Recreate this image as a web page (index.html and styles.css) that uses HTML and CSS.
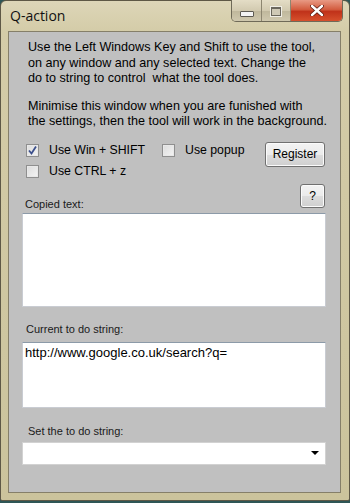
FILE: index.html
```html
<!DOCTYPE html>
<html lang="en">
<head>
  <meta charset="UTF-8">
  <title>Q-action</title>
  <link rel="stylesheet" href="styles.css">
</head>
<body>
  <div class="window">
    <div class="titlebar">
      <span class="title">Q-action</span>
      <div class="caption-buttons">
        <span class="cap-btn cap-min"><span class="glyph-min"></span></span>
        <span class="cap-btn cap-max"><span class="glyph-max"></span></span>
        <span class="cap-btn cap-close">
          <svg width="14" height="11" viewBox="0 0 14 11">
            <path d="M2 1 L12 10 M12 1 L2 10" stroke="#5a1a10" stroke-width="4" stroke-linecap="round"/>
            <path d="M2 1 L12 10 M12 1 L2 10" stroke="#fff" stroke-width="2.4" stroke-linecap="round"/>
          </svg>
        </span>
      </div>
    </div>

    <div class="client">
      <div class="intro">
        <p>Use the Left Windows Key and Shift to use the tool,<br>on any window and any selected text. Change the<br>do to string to control&nbsp; what the tool does.</p>
        <p>Minimise this window when you are funished with<br>the settings, then the tool will work in the background.</p>
      </div>

      <div class="options">
        <div class="checks">
          <label class="check"><span class="box">
            <svg width="11" height="11" viewBox="0 0 11 11"><path d="M2 5.5 L4.5 8.5 L9 1.5" fill="none" stroke="#3b4f8c" stroke-width="1.8"/></svg>
          </span>Use Win + SHIFT</label>
          <label class="check"><span class="box"></span>Use popup</label>
          <label class="check"><span class="box"></span>Use CTRL + z</label>
        </div>
        <button class="btn register">Register</button>
      </div>

      <div class="field-head">
        <span class="label copied-label">Copied text:</span>
        <button class="btn help">?</button>
      </div>
      <div class="textbox copied"></div>

      <div class="label current-label">Current to do string:</div>
      <div class="textbox current">http://www.google.co.uk/search?q=</div>

      <div class="label set-label">Set the to do string:</div>
      <div class="combo"><span class="arrow"></span></div>
    </div>
  </div>
</body>
</html>
```

FILE: styles.css
```css
body {
  margin: 0;
  width: 350px;
  height: 503px;
  background-color: #2e5656;
  font-family: "Liberation Sans", Arial, sans-serif;
  color: #000;
  overflow: hidden;
}

.window {
  box-sizing: border-box;
  height: 501px;
  border: 1px solid #5e5846;
  border-radius: 6px 6px 2px 2px;
  background: linear-gradient(180deg, #ddd6b8 0%, #d4cca8 30px, #cbc39c 100%);
  padding: 0 8px 7px 7px;
  display: flex;
  flex-direction: column;
}

.titlebar {
  height: 30px;
  display: flex;
  align-items: flex-start;
  justify-content: space-between;
}

.title {
  font-family: "Open Sans", "Liberation Sans", sans-serif;
  font-size: 14px;
  line-height: 20px;
  margin: 5px 0 0 2px;
  color: #111;
}

.caption-buttons {
  display: flex;
  margin: -1px -2px 0 0;
  height: 21px;
  border: 1px solid #6f6a58;
  border-top: none;
  border-radius: 0 0 5px 5px;
  overflow: hidden;
}

.cap-btn {
  display: flex;
  align-items: center;
  justify-content: center;
  height: 21px;
}

.cap-min, .cap-max {
  width: 29px;
  background: linear-gradient(180deg, #e4ddc6 0%, #d2cab0 50%, #bfb79b 51%, #cfc8ae 100%);
  border-right: 1px solid #8d8670;
}

.cap-max {
  width: 28px;
}

.cap-close {
  width: 51px;
  background: linear-gradient(180deg, #e89a84 0%, #d35c3f 45%, #c0321a 55%, #d6502c 100%);
}

.glyph-min {
  width: 12px;
  height: 4px;
  background: #f4f4f4;
  border: 1px solid #5d5a52;
  border-radius: 1px;
  margin-top: 6px;
}

.glyph-max {
  width: 8px;
  height: 6px;
  border: 1px solid #6a665c;
  border-top-width: 2px;
  background: #cfc9b6;
  box-shadow: 0 0 0 1px #f0eee6;
  margin-top: 1px;
}

.client {
  flex: 1;
  background-color: #c0c0c0;
  border: 1px solid #857f69;
  padding: 8px 14px 0 13px;
  display: flex;
  flex-direction: column;
}

.intro {
  padding-left: 6px;
  font-size: 12.6px;
  line-height: 15.5px;
  white-space: nowrap;
}

.intro p {
  margin: 0 0 12px;
}

.intro p:last-child {
  margin-bottom: 0;
}

.options {
  display: flex;
  justify-content: space-between;
  align-items: flex-start;
  margin-top: 10px;
}

.checks {
  display: grid;
  grid-template-columns: auto auto;
  grid-auto-rows: 21px;
  column-gap: 17px;
  margin-left: 4px;
}

.check {
  display: flex;
  align-items: center;
  font-size: 12.3px;
  white-space: nowrap;
}

.box {
  box-sizing: border-box;
  width: 13px;
  height: 13px;
  margin-right: 10px;
  border: 1px solid #8f8f8f;
  background: linear-gradient(135deg, #dcdcdc 0%, #f4f4f4 100%);
  box-shadow: inset 0 0 0 1px #e8e8e8;
  display: flex;
  align-items: center;
  justify-content: center;
}

.btn {
  box-sizing: border-box;
  font-family: "Liberation Sans", Arial, sans-serif;
  font-size: 12px;
  color: #000;
  border: 1px solid #707070;
  border-radius: 3px;
  background: linear-gradient(180deg, #f3f3f3 0%, #ebebeb 50%, #dddddd 51%, #cfcfcf 100%);
  box-shadow: inset 0 0 0 1px #fbfbfb;
  padding: 0;
}

.register {
  width: 60px;
  height: 25px;
  margin: 2px 1px 0 0;
}

.field-head {
  display: flex;
  justify-content: space-between;
  align-items: flex-end;
  margin-top: 2px;
}

.help {
  width: 25px;
  height: 24px;
  margin-right: 1px;
}

.label {
  font-size: 11px;
  line-height: 13px;
  color: #1a1a1a;
  white-space: nowrap;
}

.copied-label {
  padding-left: 3px;
  margin-bottom: -3px;
}

.textbox {
  box-sizing: border-box;
  background: #fff;
  border: 1px solid #c9ccd2;
  border-top-color: #8c9aa8;
  font-size: 13px;
  line-height: 15px;
  padding: 2px 2px;
}

.copied {
  height: 94px;
  margin-top: 5px;
}

.current-label {
  padding-left: 4px;
  margin-top: 16px;
}

.current {
  height: 66px;
  margin-top: 6px;
}

.set-label {
  padding-left: 6px;
  margin-top: 17px;
}

.combo {
  box-sizing: border-box;
  height: 23px;
  margin-top: 4px;
  background: #fff;
  border: 1px solid #d2d2d2;
  display: flex;
  align-items: center;
  justify-content: flex-end;
  padding-right: 6px;
}

.arrow {
  width: 0;
  height: 0;
  border-left: 4px solid transparent;
  border-right: 4px solid transparent;
  border-top: 4px solid #000;
}
```
